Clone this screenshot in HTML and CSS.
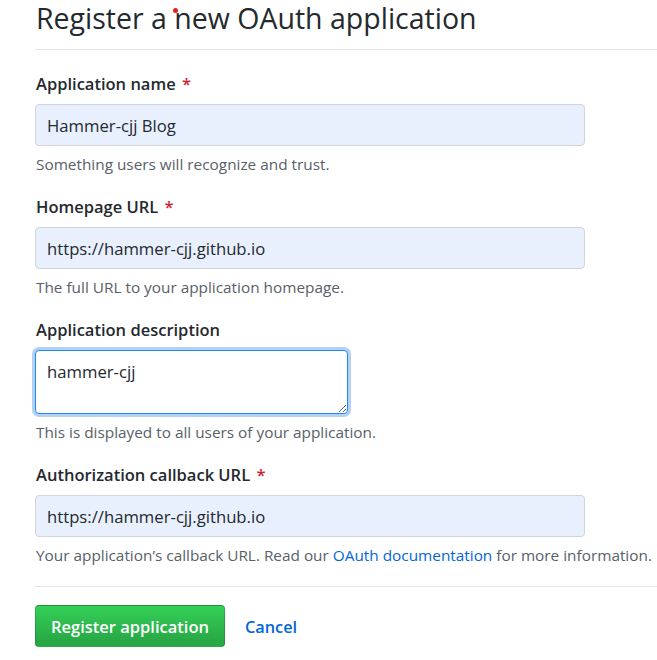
FILE: index.html
```html
<!DOCTYPE html>
<html lang="en">
<head>
<meta charset="utf-8">
<title>Register a new OAuth application</title>
<link rel="stylesheet" href="styles.css">
</head>
<body>
<div class="page">
  <div class="subhead">
    <h1 class="subhead-title">Register a new OAuth application</h1>
    <span class="cursor-dot"></span>
  </div>
  <form class="form">
    <div class="form-group">
      <label class="form-label">Application name <span class="req">*</span></label>
      <input class="form-control" type="text" value="Hammer-cjj Blog">
      <p class="note">Something users will recognize and trust.</p>
    </div>
    <div class="form-group">
      <label class="form-label">Homepage URL <span class="req">*</span></label>
      <input class="form-control" type="text" value="https://hammer-cjj.github.io">
      <p class="note">The full URL to your application homepage.</p>
    </div>
    <div class="form-group">
      <label class="form-label">Application description</label>
      <textarea class="form-textarea">hammer-cjj</textarea>
      <p class="note">This is displayed to all users of your application.</p>
    </div>
    <div class="form-group">
      <label class="form-label">Authorization callback URL <span class="req">*</span></label>
      <input class="form-control" type="text" value="https://hammer-cjj.github.io">
      <p class="note">Your application’s callback URL. Read our <a class="link" href="#">OAuth documentation</a> for more information.</p>
    </div>
    <div class="form-actions">
      <button class="btn-primary" type="button">Register application</button>
      <a class="link cancel" href="#">Cancel</a>
    </div>
  </form>
</div>
</body>
</html>
```
FILE: styles.css
```css
* { box-sizing: border-box; }
html, body { margin: 0; padding: 0; background: #fff; }
body {
  font-family: "Open Sans", "Noto Sans", sans-serif;
  color: #24292e;
  overflow: hidden;
}
.page {
  padding-left: 35px;
}
.subhead {
  position: relative;
  border-bottom: 1px solid #e1e4e8;
  height: 50px;
}
.subhead-title {
  margin: 0;
  font-size: 28.5px;
  font-weight: 400;
  line-height: 36px;
  padding-left: 1px;
  color: #24292e;
}
.cursor-dot {
  position: absolute;
  left: 138px;
  top: 8px;
  width: 5px;
  height: 5px;
  border-radius: 50%;
  background: #e0241c;
}
.form {
  padding-top: 22px;
}
.form-group {
  margin-bottom: 21px;
}
.form-label {
  display: block;
  font-size: 16.5px;
  font-weight: 600;
  line-height: 24px;
  margin-bottom: 8px;
  padding-left: 1px;
}
.req { color: #cb2431; margin-left: 2px; }
.form-control {
  display: block;
  width: 550px;
  height: 42px;
  padding: 0 11px;
  font-family: inherit;
  font-size: 16.7px;
  color: #24292e;
  background: #e8f0fe;
  border: 1px solid #d1d5da;
  border-radius: 4px;
  outline: none;
}
.form-textarea {
  display: block;
  width: 313px;
  height: 64px;
  padding: 9px 11px 8px;
  font-family: inherit;
  font-size: 16.7px;
  line-height: 24px;
  color: #24292e;
  background: #fff;
  border: 1px solid #2188ff;
  border-radius: 4px;
  box-shadow: 0 0 0 3px rgba(3, 102, 214, 0.3);
  outline: none;
  resize: vertical;
}
.note {
  margin: 8px 0 0;
  font-size: 15.35px;
  line-height: 20px;
  color: #586069;
  padding-left: 1px;
  white-space: nowrap;
}
.link { color: #0366d6; text-decoration: none; }
.form-actions {
  border-top: 1px solid #e1e4e8;
  margin-top: 0;
  padding-top: 18px;
  display: flex;
  align-items: center;
  gap: 20px;
}
.btn-primary {
  height: 42px;
  width: 190px;
  padding: 0 10px;
  font-family: inherit;
  font-size: 16.5px;
  font-weight: 600;
  color: #fff;
  background: linear-gradient(180deg, #34d058 0%, #28a745 90%);
  border: 1px solid rgba(27, 31, 35, 0.2);
  border-radius: 4px;
}
.cancel {
  font-size: 16.3px;
  font-weight: 600;
  padding-top: 2px;
}
```
